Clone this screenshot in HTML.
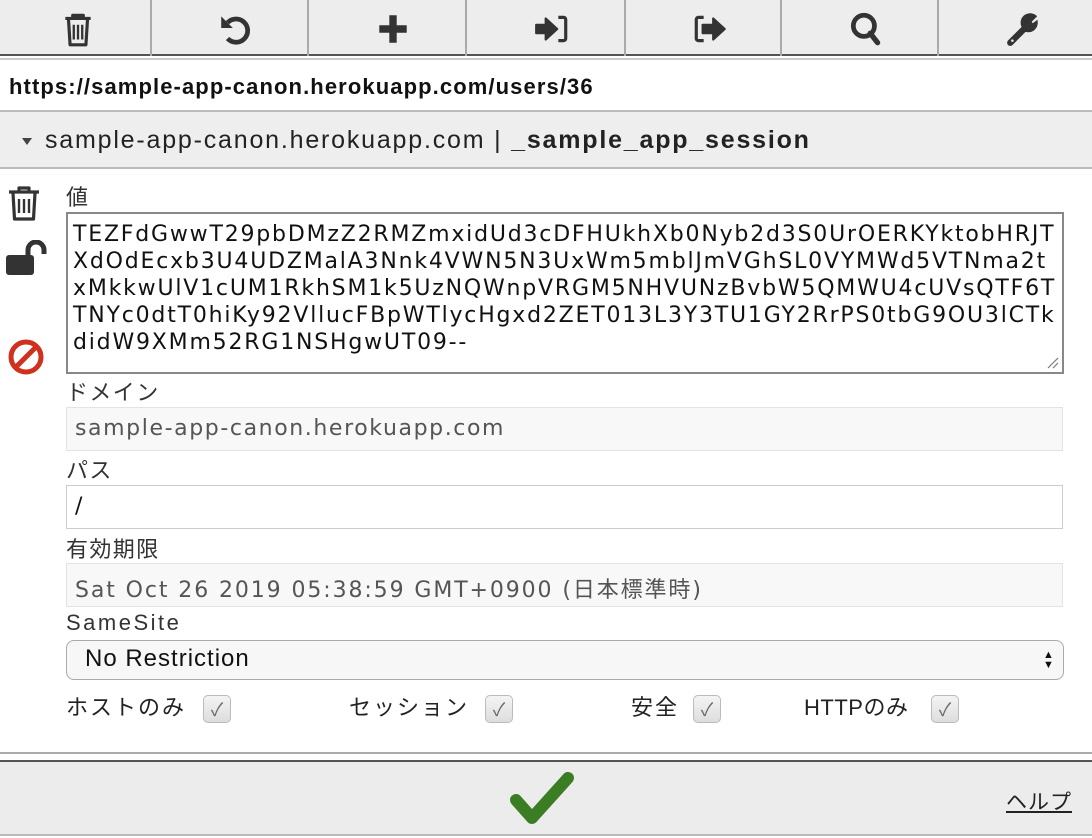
<!DOCTYPE html>
<html><head><meta charset="utf-8"><style>
*{margin:0;padding:0;box-sizing:border-box}
body{width:1092px;height:838px;background:#fff;position:relative;overflow:hidden;font-family:"Liberation Sans","Noto Sans CJK JP",sans-serif;color:#222}
.a{position:absolute}
.tb{left:0;top:0;width:1092px;height:56px;background:#ededed;border-bottom:2px solid #555}
.sep{top:0;width:2px;height:56px;background:#aaa}
.ic{top:10px;width:38px;height:38px}
.lbl{position:absolute;left:66px;font-size:22px;letter-spacing:1.4px;color:#333;font-family:"Liberation Sans","Noto Sans CJK JP",sans-serif}
.fld{position:absolute;left:66px;width:997px;height:44px;border:1px solid #e3e3e3;background:#f8f8f8;font-family:"DejaVu Sans","Noto Sans CJK JP",sans-serif;font-size:22px;letter-spacing:1.6px;color:#555;padding:8px 0 0 8px;white-space:nowrap}
.cb{position:absolute;top:695px;width:28px;height:28px;border:1px solid #bbb;border-radius:5px;background:linear-gradient(#f4f4f4,#ddd);color:#666;font-size:18px;text-align:center;line-height:28px}
.ct{position:absolute;top:690px;font-size:22px;letter-spacing:2px;color:#222}
</style></head><body>
<div class="a tb"></div>
<div class="a sep" style="left:150px"></div><div class="a sep" style="left:307px"></div><div class="a sep" style="left:465px"></div><div class="a sep" style="left:624px"></div><div class="a sep" style="left:780px"></div><div class="a sep" style="left:937px"></div>
<svg class="a ic" style="left:59px" viewBox="0 0 36 36"><path d="M6 8h24M13 8V5h10v3M9 9l1.5 24h15L27 9" fill="none" stroke="#333" stroke-width="3" stroke-linejoin="round"/><path d="M14 14v14M18 14v14M22 14v14" stroke="#333" stroke-width="2.2"/></svg>
<svg class="a ic" style="left:217px" viewBox="0 0 36 36"><path d="M10 12A11 11 0 1 1 10 27" fill="none" stroke="#333" stroke-width="4.5"/><path d="M4 6v11h11z" fill="#333"/></svg>
<svg class="a ic" style="left:374px" viewBox="0 0 36 36"><path d="M18 5v26M5 18h26" stroke="#333" stroke-width="7"/></svg>
<svg class="a ic" style="left:533px" viewBox="0 0 36 36"><path d="M3 14h9V8l11 10-11 10v-6H3z" fill="#333" stroke="#333" stroke-width="2" stroke-linejoin="round"/><path d="M24 7h5a2 2 0 0 1 2 2v18a2 2 0 0 1-2 2h-5" fill="none" stroke="#333" stroke-width="3"/></svg>
<svg class="a ic" style="left:691px" viewBox="0 0 36 36"><path d="M12 7H7a2 2 0 0 0-2 2v18a2 2 0 0 0 2 2h5" fill="none" stroke="#333" stroke-width="3"/><path d="M11 14h10V8l11 10-11 10v-6H11z" fill="#333" stroke="#333" stroke-width="2" stroke-linejoin="round"/></svg>
<svg class="a ic" style="left:847px" viewBox="0 0 36 36"><circle cx="16" cy="15" r="10" fill="none" stroke="#333" stroke-width="4.5"/><path d="M22 22l7 9" stroke="#333" stroke-width="5" stroke-linecap="round"/></svg>
<svg class="a ic" style="left:1005px" viewBox="0 0 36 36"><path d="M5 31l14-14" stroke="#333" stroke-width="6" stroke-linecap="round"/><path d="M16 14a8 8 0 0 1 13-8l-5 5 2 3 4-3a8 8 0 0 1-12 8z" fill="#333" stroke="#333" stroke-width="2"/><circle cx="7" cy="29" r="1.2" fill="#eee"/></svg>
<div class="a" style="left:0;top:58px;width:1092px;height:2px;background:#ccc"></div>
<div class="a" style="left:9px;top:74px;font-size:22px;letter-spacing:1.1px;font-weight:bold;color:#111">https://sample-app-canon.herokuapp.com/users/36</div>
<div class="a" style="left:0;top:110px;width:1092px;height:59px;background:#eee;border-top:2px solid #bbb;border-bottom:2px solid #bbb"></div>
<div class="a" style="left:22px;top:138px;width:0;height:0;border-left:5px solid transparent;border-right:5px solid transparent;border-top:7px solid #444"></div>
<div class="a" style="left:45px;top:126px;font-size:25px;letter-spacing:1.8px;color:#222">sample-app-canon.herokuapp.com | <b>_sample_app_session</b></div>
<svg class="a" style="left:6px;top:184px" width="36" height="40" viewBox="0 0 36 40"><path d="M3 8h30M13 8V4h10v4M7 9l1.5 26h19L29 9" fill="none" stroke="#333" stroke-width="3.2" stroke-linejoin="round"/><path d="M13 15v14M18 15v14M23 15v14" stroke="#333" stroke-width="2.4"/></svg>
<svg class="a" style="left:6px;top:240px" width="42" height="40" viewBox="0 0 42 40"><rect x="0" y="15" width="28" height="20" rx="3" fill="#333"/><path d="M22 16V10a8 8 0 0 1 16 0v4" fill="none" stroke="#333" stroke-width="5"/></svg>
<svg class="a" style="left:6px;top:337px" width="40" height="40" viewBox="0 0 40 40"><circle cx="20" cy="20" r="15" fill="none" stroke="#d0301e" stroke-width="5"/><path d="M10 30L30 10" stroke="#d0301e" stroke-width="5"/></svg>
<div class="lbl" style="top:180px">値</div>
<div class="a" style="left:66px;top:212px;width:998px;height:162px;border:2px solid #888;font-family:'DejaVu Sans',sans-serif;font-size:22px;letter-spacing:1.8px;line-height:27px;padding:7px 0 0 5px;white-space:pre;overflow:hidden;color:#111">TEZFdGwwT29pbDMzZ2RMZmxidUd3cDFHUkhXb0Nyb2d3S0UrOERKYktobHRJT
XdOdEcxb3U4UDZMalA3Nnk4VWN5N3UxWm5mblJmVGhSL0VYMWd5VTNma2t
xMkkwUlV1cUM1RkhSM1k5UzNQWnpVRGM5NHVUNzBvbW5QMWU4cUVsQTF6T
TNYc0dtT0hiKy92VllucFBpWTlycHgxd2ZET013L3Y3TU1GY2RrPS0tbG9OU3lCTk
didW9XMm52RG1NSHgwUT09--</div>
<svg class="a" style="left:1046px;top:356px" width="14" height="14"><path d="M2 12L12 2M7 12l5-5" stroke="#777" stroke-width="1.2"/></svg>
<div class="lbl" style="top:375px">ドメイン</div>
<div class="fld" style="top:407px">sample-app-canon.herokuapp.com</div>
<div class="lbl" style="top:453px">パス</div>
<div class="fld" style="top:485px;background:#fff;border-color:#ccc;color:#111">/</div>
<div class="lbl" style="top:532px">有効期限</div>
<div class="fld" style="top:563px;letter-spacing:1.9px">Sat Oct 26 2019 05:38:59 GMT+0900 (日本標準時)</div>
<div class="lbl" style="top:610px;letter-spacing:2.5px">SameSite</div>
<div class="a" style="left:66px;top:640px;width:998px;height:40px;border:1px solid #aaa;border-radius:8px;background:#f7f7f7;font-size:24px;letter-spacing:1px;color:#111;padding:4px 0 0 18px">No Restriction</div>
<div class="a" style="left:1043px;top:650px;font-size:11px;line-height:10px;color:#111">▲<br>▼</div>
<div class="ct" style="left:66px">ホストのみ</div><div class="cb" style="left:203px">✓</div>
<div class="ct" style="left:349px">セッション</div><div class="cb" style="left:485px">✓</div>
<div class="ct" style="left:631px">安全</div><div class="cb" style="left:693px">✓</div>
<div class="ct" style="left:804px;letter-spacing:0.5px">HTTPのみ</div><div class="cb" style="left:931px">✓</div>
<div class="a" style="left:0;top:752px;width:1092px;height:2px;background:#aaa"></div>
<div class="a" style="left:0;top:760px;width:1092px;height:76px;background:#ececec;border-top:2px solid #555;border-bottom:2px solid #bbb"></div>
<svg class="a" style="left:508px;top:770px" width="70" height="60" viewBox="0 0 70 60"><path d="M8 30l16 18L60 8" fill="none" stroke="#3a7d23" stroke-width="12" stroke-linejoin="round" stroke-linecap="round"/></svg>
<div class="a" style="left:1006px;top:786px;font-size:21px;letter-spacing:1px;color:#222;text-decoration:underline">ヘルプ</div>
</body></html>
